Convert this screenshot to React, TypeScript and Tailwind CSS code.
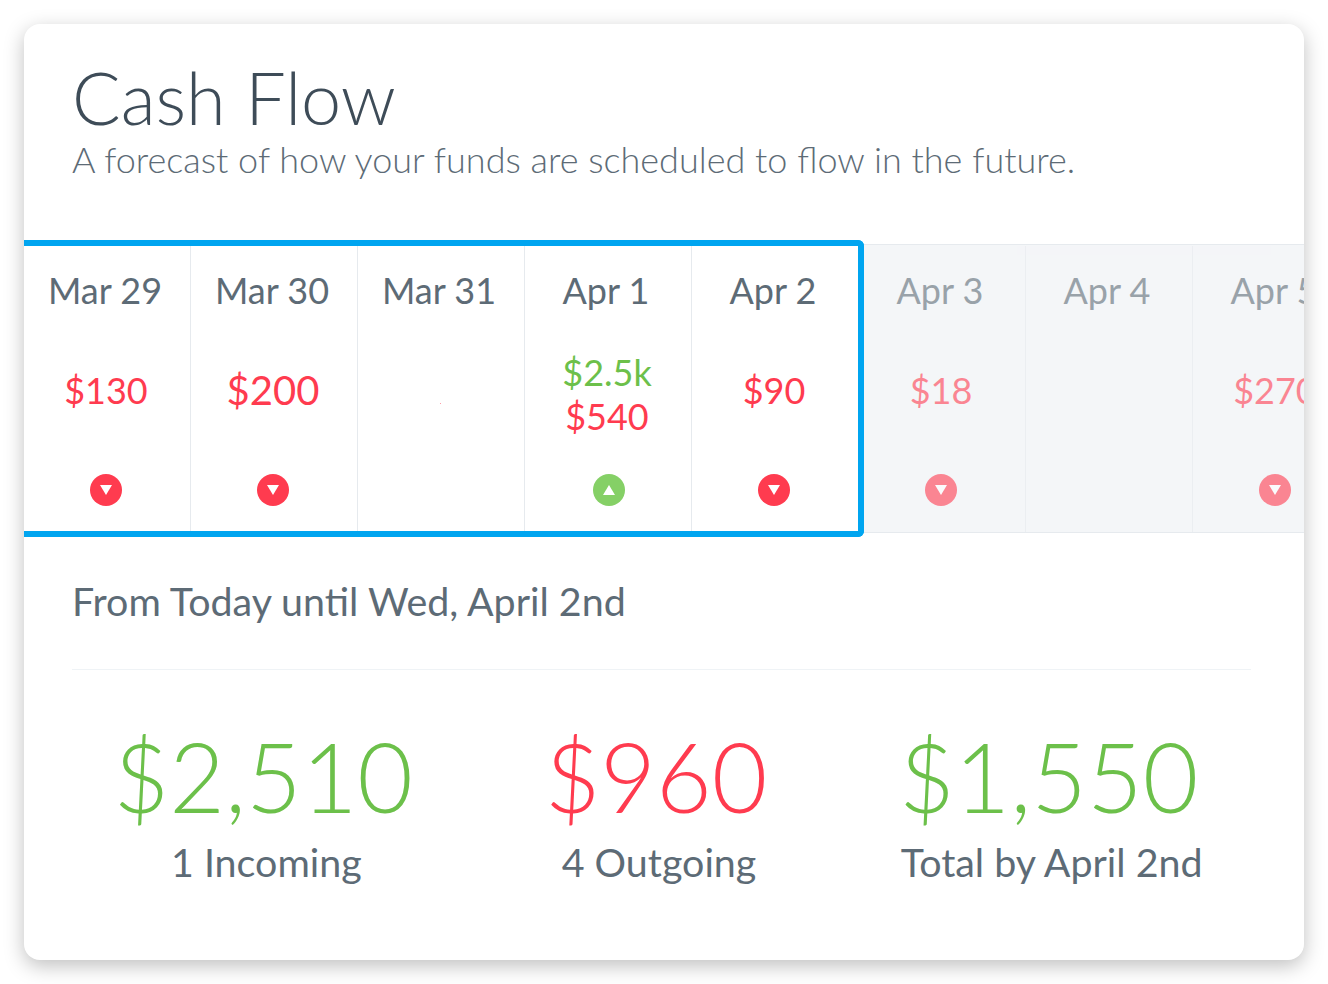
const days = [
  { label: 'Mar 29', amounts: [{ text: '$130', color: 'red', size: 'text-[36px]' }], dir: 'down' },
  { label: 'Mar 30', amounts: [{ text: '$200', color: 'red', size: 'text-[40px]' }], dir: 'down' },
  { label: 'Mar 31', amounts: [], dir: '' },
  {
    label: 'Apr 1',
    amounts: [
      { text: '$2.5k', color: 'green', size: 'text-[36px]' },
      { text: '$540', color: 'red', size: 'text-[36px]' },
    ],
    dir: 'up',
  },
  { label: 'Apr 2', amounts: [{ text: '$90', color: 'red', size: 'text-[36px]' }], dir: 'down' },
]

const futureDays = [
  { label: 'Apr 3', amounts: [{ text: '$18', color: 'red', size: 'text-[36px]' }], dir: 'down' },
  { label: 'Apr 4', amounts: [], dir: '' },
  { label: 'Apr 5', amounts: [{ text: '$270', color: 'red', size: 'text-[36px]' }], dir: 'down' },
]

type Day = (typeof days)[number]

function Arrow({ dir }: { dir: string }) {
  if (!dir) return <div className="h-8 w-8" />
  const up = dir === 'up'
  return (
    <div className={`flex h-8 w-8 items-center justify-center rounded-full ${up ? 'ml-1 bg-[#85d066]' : 'bg-[#ff3b4f]'}`}>
      <svg width="12" height="10" viewBox="0 0 12 10">
        <path d={up ? 'M6 0 L12 10 L0 10 Z' : 'M0 0 L12 0 L6 10 Z'} fill="#fff" />
      </svg>
    </div>
  )
}

function DayCell({ day, last }: { day: Day; last?: boolean }) {
  return (
    <div className={`flex shrink-0 flex-col items-center pr-[2px] ${last ? 'w-[166px]' : 'w-[167px] border-r border-[#e6eaee]'}`}>
      <div className="mt-[22px] pr-[2px] text-[36px] leading-[44px] text-[#5d6b76]">{day.label}</div>
      <div className={`mt-[11px] flex h-[132px] flex-col items-center justify-center ${day.amounts.length > 1 ? 'pt-[10px]' : 'pt-[2px]'}`}>
        {day.amounts.map((a) => (
          <div
            key={a.text}
            className={`${a.size} leading-[44px] ${a.color === 'green' ? 'text-[#6cc04a]' : 'text-[#ff3b4f]'}`}>
            {a.text}
          </div>
        ))}
        {day.label === 'Mar 31' && <div className="mt-[26px] h-px w-px bg-[#ff3b4f]/50" />}
      </div>
      <div className="mt-[19px]">
        <Arrow dir={day.dir} />
      </div>
    </div>
  )
}

function Total({ value, label, color }: { value: string; label: string; color: string }) {
  return (
    <div className="flex flex-col items-center">
      <div className={`pr-[6px] text-[96px] font-light leading-[112px] ${color}`}>{value}</div>
      <div className="mt-[6px] text-[39.4px] leading-[48px] text-[#5d6b76]">{label}</div>
    </div>
  )
}

export default function App() {
  return (
    <div className="h-[984px] w-[1328px] bg-white p-6 font-['Lato',sans-serif]">
      <div className="h-[936px] w-[1280px] overflow-hidden rounded-2xl bg-white shadow-[0_6px_20px_rgba(0,0,0,0.25)]">
        <div className="pl-12 pt-[31px]">
          <h1 className="text-[72px] font-light leading-[84px] text-[#3e4c58]">Cash Flow</h1>
          <p className="text-[36px] font-light leading-[40px] text-[#5d6b76]">
            A forecast of how your funds are scheduled to flow in the future.
          </p>
        </div>
        <div className="mt-[65px] flex h-[289px] border-y border-[#e6eaee] bg-[#f4f6f8]">
          <div className="relative z-10 -my-[5px] mr-[-5px] flex h-[297px] shrink-0 rounded-r-[6px] border-y-[6px] border-r-[6px] border-[#00a5f0] bg-white">
            {days.map((d, i) => (
              <DayCell key={d.label} day={d} last={i === days.length - 1} />
            ))}
          </div>
          <div className="flex pt-px opacity-60">
            {futureDays.map((d) => (
              <DayCell key={d.label} day={d} />
            ))}
          </div>
        </div>
        <div className="ml-12 mr-[53px] border-b border-[#eff3f6] pb-[44px] pt-[44px] text-[39.4px] leading-[48px] text-[#5d6b76]">
          From Today until Wed, April 2nd
        </div>
        <div className="ml-[46px] mt-[50px] grid w-[1178px] grid-cols-3">
          <Total value="$2,510" label="1 Incoming" color="text-[#6cc04a]" />
          <Total value="$960" label="4 Outgoing" color="text-[#ff3b4f]" />
          <Total value="$1,550" label="Total by April 2nd" color="text-[#6cc04a]" />
        </div>
      </div>
    </div>
  )
}
